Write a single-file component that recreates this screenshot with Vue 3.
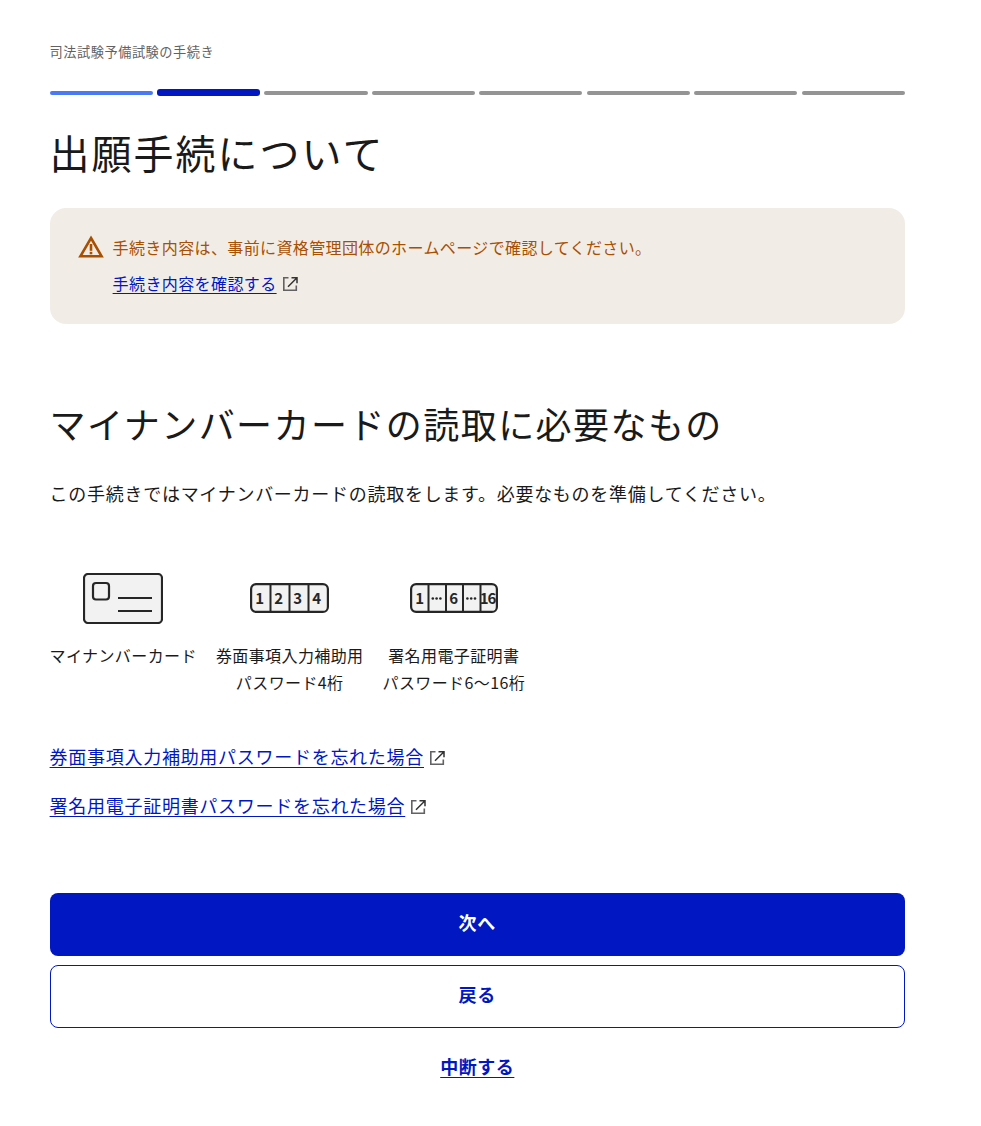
<script setup>
const steps = ['done', 'current', '', '', '', '', '', '']
const items = [
  { id: 'card', lines: ['マイナンバーカード'] },
  { id: 'four', lines: ['券面事項入力補助用', 'パスワード4桁'] },
  { id: 'sign', lines: ['署名用電子証明書', 'パスワード6～16桁'] },
]
const fourDigits = ['1', '2', '3', '4']
const signDigits = [
  { text: '1', x: 10 },
  { text: '6', x: 44 },
  { text: '16', x: 77.5 },
]
const dotGroups = [26.6, 61.2]
const dotOffsets = [-3.8, 0, 3.8]
</script>

<template>
  <main class="page">
    <p class="service">司法試験予備試験の手続き</p>
    <div class="steps">
      <span v-for="(s, i) in steps" :key="i" class="step" :class="s"></span>
    </div>
    <h1>出願手続について</h1>

    <section class="notice">
      <div class="notice-row">
        <svg class="warn" width="26" height="24" viewBox="0 0 26 24">
          <path d="M13 3 L23.600 21.300 H2.400 Z" fill="none" stroke="#a84f00" stroke-width="2.600" stroke-linejoin="miter" />
          <rect x="11.700" y="9" width="2.600" height="6.800" fill="#a84f00" />
          <rect x="11.700" y="16.800" width="2.600" height="2.500" fill="#a84f00" />
        </svg>
        <p>手続き内容は、事前に資格管理団体のホームページで確認してください。</p>
      </div>
      <div class="notice-link">
        <a href="#">手続き内容を確認する</a>
        <svg class="ext" viewBox="0 0 16 16" width="16" height="16">
          <path d="M6.500 1.800H1.800V14.300H14.300V9.500" fill="none" stroke="#626264" stroke-width="1.600" />
          <path d="M9.500 1.700H15V7.200M15 1.700 6 10.700" fill="none" stroke="#333" stroke-width="1.500" />
        </svg>
      </div>
    </section>

    <h2>マイナンバーカードの読取に必要なもの</h2>
    <p class="lead">この手続きではマイナンバーカードの読取をします。必要なものを準備してください。</p>

    <ul class="needs">
      <li v-for="item in items" :key="item.id" class="need">
        <div class="need-icon">
          <svg v-if="item.id === 'card'" width="80" height="51" viewBox="0 0 80 51">
            <rect x="1" y="1" width="78" height="49" rx="4" fill="#f2f2f2" stroke="#262626" stroke-width="2.200" />
            <rect x="10" y="10" width="16" height="16.500" rx="3" fill="#f2f2f2" stroke="#262626" stroke-width="2.200" />
            <path d="M35 25H69M35 38H69" stroke="#262626" stroke-width="2" />
          </svg>
          <svg v-else-if="item.id === 'four'" width="79" height="30" viewBox="0 0 79 30">
            <rect x="1.100" y="1.100" width="76.800" height="27.800" rx="5" fill="#f2f2f2" stroke="#262626" stroke-width="2.200" />
            <path d="M20.500 1V29M39.500 1V29M58.500 1V29" stroke="#262626" stroke-width="2" />
            <text v-for="(d, i) in fourDigits" :key="i" :x="10 + i * 19" y="20.500" class="digit">{{ d }}</text>
          </svg>
          <svg v-else width="88" height="30" viewBox="0 0 88 30">
            <rect x="1.100" y="1.100" width="85.800" height="27.800" rx="5" fill="#f2f2f2" stroke="#262626" stroke-width="2.200" />
            <path d="M18.500 1V29M36 1V29M53 1V29M70.500 1V29" stroke="#262626" stroke-width="2" />
            <text v-for="d in signDigits" :key="d.text" :x="d.x" y="20.500" class="digit" :class="{ small: d.text === '16' }">{{ d.text }}</text>
            <g v-for="g in dotGroups" :key="g" fill="#262626">
              <circle v-for="o in dotOffsets" :key="o" :cx="g + o" cy="15.500" r="1.300" />
            </g>
          </svg>
        </div>
        <p v-for="line in item.lines" :key="line">{{ line }}</p>
      </li>
    </ul>

    <div class="help">
      <div class="help-row">
        <a href="#">券面事項入力補助用パスワードを忘れた場合</a>
        <svg class="ext" viewBox="0 0 16 16" width="16" height="16">
          <path d="M6.500 1.800H1.800V14.300H14.300V9.500" fill="none" stroke="#626264" stroke-width="1.600" />
          <path d="M9.500 1.700H15V7.200M15 1.700 6 10.700" fill="none" stroke="#333" stroke-width="1.500" />
        </svg>
      </div>
      <div class="help-row">
        <a href="#">署名用電子証明書パスワードを忘れた場合</a>
        <svg class="ext" viewBox="0 0 16 16" width="16" height="16">
          <path d="M6.500 1.800H1.800V14.300H14.300V9.500" fill="none" stroke="#626264" stroke-width="1.600" />
          <path d="M9.500 1.700H15V7.200M15 1.700 6 10.700" fill="none" stroke="#333" stroke-width="1.500" />
        </svg>
      </div>
    </div>

    <div class="actions">
      <button class="btn primary" type="button">次へ</button>
      <button class="btn secondary" type="button">戻る</button>
      <a class="suspend" href="#">中断する</a>
    </div>
  </main>
</template>

<style>
html, body { background: #fff; }
</style>

<style scoped>
.page {
  width: 855.4px;
  margin-left: 49.6px;
  padding-top: 42px;
  font-family: "Noto Sans CJK JP", "Noto Sans", sans-serif;
  color: #1a1a1a;
}
p, h1, h2, ul { margin: 0; padding: 0; }
.service { font-size: 13.2px; line-height: 20px; letter-spacing: 0.04em; color: #626264; }
.steps { display: flex; gap: 4.4px; margin-top: 27px; margin-right: 0.3px; align-items: center; height: 7px; }
.step { flex: 1; height: 4px; border-radius: 2px; background: #949494; }
.step.done { background: #4979f5; }
.step.current { height: 7px; border-radius: 3px; background: #0017c1; }
h1 { margin-top: 26px; font-size: 40px; line-height: 60px; font-weight: 400; letter-spacing: 0.05em; }
.notice {
  margin-top: 26px;
  height: 116px;
  box-sizing: border-box;
  padding: 23px 28px;
  border-radius: 16px;
  background: #f1ede6;
}
.notice-row { display: flex; align-items: center; gap: 9px; color: #a84f00; font-size: 16px; line-height: 32px; letter-spacing: 0.024em; }
.warn { flex: none; }
.notice-link { display: flex; align-items: center; gap: 5px; margin: 4px 0 0 35px; font-size: 16px; line-height: 32px; letter-spacing: 0.025em; }
.ext { position: relative; top: 1px; }
.help-row .ext { top: 2px; }
a { color: #0017c1; text-decoration: underline; text-underline-offset: 3px; }
h2 { margin-top: 69px; font-size: 36px; line-height: 60px; font-weight: 400; letter-spacing: 0.04em; }
.lead { margin-top: 24px; font-size: 18px; line-height: 32px; letter-spacing: 0.04em; }
.needs { display: flex; gap: 19px; margin-top: 56px; list-style: none; }
.need { display: flex; flex-direction: column; align-items: center; font-size: 16px; line-height: 27px; letter-spacing: 0.025em; }
.need-icon { height: 66px; display: flex; align-items: center; justify-content: center; margin-bottom: 11px; }
.digit { font: 700 15px "Noto Sans CJK JP", sans-serif; fill: #262626; text-anchor: middle; }
.digit.small { letter-spacing: -1px; }
.help { margin-top: 44px; font-size: 18px; letter-spacing: 0.04em; }
.help-row { display: flex; align-items: center; gap: 5px; height: 32px; margin-bottom: 17px; }
.actions { margin-top: 72px; display: flex; flex-direction: column; align-items: center; }
.btn {
  width: 100%;
  height: 63px;
  box-sizing: border-box;
  padding-bottom: 6px;
  border-radius: 8px;
  font: 700 18px "Noto Sans CJK JP", sans-serif;
  letter-spacing: 0.04em;
}
.primary { background: #0017c1; color: #fff; border: 0; }
.secondary { margin-top: 9px; background: #fff; color: #0017c1; border: 1px solid #0017c1; }
.suspend { margin-top: 24px; font-size: 18px; line-height: 28px; font-weight: 700; letter-spacing: 0.03em; }
</style>
